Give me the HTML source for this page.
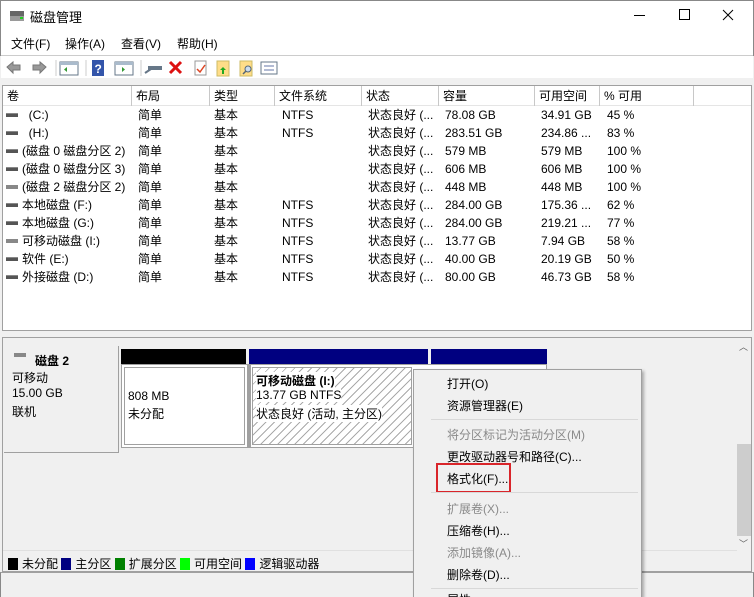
<!DOCTYPE html>
<html style="overflow:hidden"><head><meta charset="utf-8"><style>
*{margin:0;padding:0;box-sizing:border-box}
html,body{width:754px;height:597px;overflow:hidden}
body{background:#f0f0f0;font-family:"Liberation Sans","Noto Sans CJK SC",sans-serif;font-size:12px;color:#000;position:relative}
.a{position:absolute;white-space:nowrap}
.row{position:absolute;left:0;height:18px;line-height:18px;width:740px}
.row span{position:absolute}
.hd span{position:absolute;top:0;height:20px;line-height:20px;border-right:1px solid #c8c8c8;padding-left:4px}
.dk{display:inline-block;width:12px;height:4px;background:#555;border-top:1px solid #888;vertical-align:middle;margin-right:4px;position:relative;top:-1px}
.mi{position:absolute;left:447px;font-size:12px}
.dis{color:#8a8a8a}
.sep{position:absolute;left:431px;width:207px;height:1px;background:#d8d8d8}
.lg{display:inline-block;width:10px;height:12px;vertical-align:middle;margin:0 4px 0 0;position:relative;top:-1px}
</style></head><body>
<div class="a" style="left:0;top:0;width:754px;height:56px;background:#fff;border-left:1px solid #888;border-right:1px solid #888;border-top:1px solid #888"></div>
<svg class="a" style="left:9px;top:10px" width="16" height="12"><rect x="1" y="1" width="14" height="5" fill="#666"/><rect x="1" y="6" width="14" height="5" fill="#9a9a9a"/><rect x="11" y="7" width="3" height="2" fill="#2c2"/></svg>
<div class="a" style="left:30px;top:7px;font-size:13px">磁盘管理</div>
<div class="a" style="left:634px;top:15px;width:11px;height:1px;background:#000"></div>
<div class="a" style="left:679px;top:9px;width:11px;height:11px;border:1px solid #000"></div>
<svg class="a" style="left:722px;top:9px" width="12" height="12"><path d="M1 1L11 11M11 1L1 11" stroke="#000" stroke-width="1"/></svg>
<div class="a" style="left:11px;top:35px">文件(F)</div>
<div class="a" style="left:65px;top:35px">操作(A)</div>
<div class="a" style="left:121px;top:35px">查看(V)</div>
<div class="a" style="left:177px;top:35px">帮助(H)</div>
<div class="a" style="left:1px;top:55px;width:752px;height:1px;background:#ccc"></div>
<div class="a" style="left:1px;top:56px;width:752px;height:22px;background:#fff"></div>
<svg class="a" style="left:5px;top:59px" width="280" height="18">
<path d="M2 8L8 3V6H15V11H8V14Z" fill="#999" stroke="#777"/>
<path d="M41 8L35 3V6H28V11H35V14Z" fill="#999" stroke="#777"/>
<line x1="51" y1="1" x2="51" y2="17" stroke="#ccc"/>
<rect x="55" y="3" width="18" height="13" fill="#fff" stroke="#678"/><rect x="55" y="3" width="18" height="3" fill="#abc"/><path d="M62 8L59 10.5L62 13Z" fill="#393"/>
<line x1="81" y1="1" x2="81" y2="17" stroke="#ccc"/>
<rect x="87" y="1" width="12" height="16" fill="#35a"/><text x="89.5" y="14" fill="#fff" font-size="12" font-weight="bold" font-family="Liberation Sans">?</text>
<rect x="110" y="3" width="18" height="13" fill="#fff" stroke="#678"/><rect x="110" y="3" width="18" height="3" fill="#abc"/><path d="M117 8L120 10.5L117 13Z" fill="#393"/>
<line x1="136" y1="1" x2="136" y2="17" stroke="#ccc"/>
<rect x="143" y="7" width="14" height="4" fill="#678"/><line x1="140" y1="14" x2="146" y2="10" stroke="#678" stroke-width="2"/>
<path d="M165 3L176 14M176 3L165 14" stroke="#d11" stroke-width="3"/>
<rect x="190" y="2" width="11" height="14" fill="#fff" stroke="#999"/><path d="M192 10L195 13L200 6" stroke="#d42" fill="none" stroke-width="1.5"/>
<rect x="212" y="2" width="12" height="15" fill="#fd8" stroke="#cb6"/><path d="M218 8L221 11H219V15H217V11H215Z" fill="#2a2"/>
<rect x="235" y="2" width="12" height="15" fill="#fd8" stroke="#cb6"/><circle cx="243" cy="10" r="3" fill="#cde" stroke="#567"/><line x1="241" y1="12" x2="238" y2="15" stroke="#567" stroke-width="1.5"/>
<rect x="256" y="3" width="16" height="12" fill="#fff" stroke="#678"/><line x1="259" y1="7" x2="269" y2="7" stroke="#67a"/><line x1="259" y1="11" x2="269" y2="11" stroke="#67a"/>
</svg>
<div class="a" style="left:0;top:78px;width:754px;height:8px;background:#f0f0f0"></div>
<div class="a" style="left:2px;top:85px;width:750px;height:246px;background:#fff;border:1px solid #a0a0a0"></div>
<div class="a hd" style="left:3px;top:86px;width:748px;height:20px;background:#fff;border-bottom:1px solid #e5e5e5">
<span style="left:0;width:129px">卷</span><span style="left:129px;width:78px">布局</span><span style="left:207px;width:65px">类型</span><span style="left:272px;width:87px">文件系统</span><span style="left:359px;width:77px">状态</span><span style="left:436px;width:96px">容量</span><span style="left:532px;width:65px">可用空间</span><span style="left:597px;width:94px">% 可用</span>
</div>
<div class="a" style="left:3px;top:106px;font-size:12px">
<div class="row" style="top:0"><span style="left:3px"><i class="dk"></i>&nbsp; (C:)</span><span style="left:135px">简单</span><span style="left:211px">基本</span><span style="left:279px">NTFS</span><span style="left:365px">状态良好 (...</span><span style="left:442px">78.08 GB</span><span style="left:538px">34.91 GB</span><span style="left:604px">45 %</span></div>
<div class="row" style="top:18px"><span style="left:3px"><i class="dk"></i>&nbsp; (H:)</span><span style="left:135px">简单</span><span style="left:211px">基本</span><span style="left:279px">NTFS</span><span style="left:365px">状态良好 (...</span><span style="left:442px">283.51 GB</span><span style="left:538px">234.86 ...</span><span style="left:604px">83 %</span></div>
<div class="row" style="top:36px"><span style="left:3px"><i class="dk"></i>(磁盘 0 磁盘分区 2)</span><span style="left:135px">简单</span><span style="left:211px">基本</span><span style="left:365px">状态良好 (...</span><span style="left:442px">579 MB</span><span style="left:538px">579 MB</span><span style="left:604px">100 %</span></div>
<div class="row" style="top:54px"><span style="left:3px"><i class="dk"></i>(磁盘 0 磁盘分区 3)</span><span style="left:135px">简单</span><span style="left:211px">基本</span><span style="left:365px">状态良好 (...</span><span style="left:442px">606 MB</span><span style="left:538px">606 MB</span><span style="left:604px">100 %</span></div>
<div class="row" style="top:72px"><span style="left:3px"><i class="dk" style="background:#888"></i>(磁盘 2 磁盘分区 2)</span><span style="left:135px">简单</span><span style="left:211px">基本</span><span style="left:365px">状态良好 (...</span><span style="left:442px">448 MB</span><span style="left:538px">448 MB</span><span style="left:604px">100 %</span></div>
<div class="row" style="top:90px"><span style="left:3px"><i class="dk"></i>本地磁盘 (F:)</span><span style="left:135px">简单</span><span style="left:211px">基本</span><span style="left:279px">NTFS</span><span style="left:365px">状态良好 (...</span><span style="left:442px">284.00 GB</span><span style="left:538px">175.36 ...</span><span style="left:604px">62 %</span></div>
<div class="row" style="top:108px"><span style="left:3px"><i class="dk"></i>本地磁盘 (G:)</span><span style="left:135px">简单</span><span style="left:211px">基本</span><span style="left:279px">NTFS</span><span style="left:365px">状态良好 (...</span><span style="left:442px">284.00 GB</span><span style="left:538px">219.21 ...</span><span style="left:604px">77 %</span></div>
<div class="row" style="top:126px"><span style="left:3px"><i class="dk" style="background:#888"></i>可移动磁盘 (I:)</span><span style="left:135px">简单</span><span style="left:211px">基本</span><span style="left:279px">NTFS</span><span style="left:365px">状态良好 (...</span><span style="left:442px">13.77 GB</span><span style="left:538px">7.94 GB</span><span style="left:604px">58 %</span></div>
<div class="row" style="top:144px"><span style="left:3px"><i class="dk"></i>软件 (E:)</span><span style="left:135px">简单</span><span style="left:211px">基本</span><span style="left:279px">NTFS</span><span style="left:365px">状态良好 (...</span><span style="left:442px">40.00 GB</span><span style="left:538px">20.19 GB</span><span style="left:604px">50 %</span></div>
<div class="row" style="top:162px"><span style="left:3px"><i class="dk"></i>外接磁盘 (D:)</span><span style="left:135px">简单</span><span style="left:211px">基本</span><span style="left:279px">NTFS</span><span style="left:365px">状态良好 (...</span><span style="left:442px">80.00 GB</span><span style="left:538px">46.73 GB</span><span style="left:604px">58 %</span></div>
</div>
<div class="a" style="left:2px;top:337px;width:750px;height:235px;background:#f0f0f0;border:1px solid #a0a0a0"></div>
<div class="a" style="left:737px;top:338px;width:14px;height:212px;background:#f0f0f0"></div>
<div class="a" style="left:737px;top:444px;width:14px;height:92px;background:#cdcdcd"></div>
<div class="a" style="left:739px;top:340px;font-size:9px;color:#606060">︿</div>
<div class="a" style="left:739px;top:537px;font-size:9px;color:#606060">﹀</div>
<div class="a" style="left:4px;top:346px;width:115px;height:107px;background:#f0f0f0;border-right:1px solid #a0a0a0;border-bottom:1px solid #a0a0a0"></div>
<div class="a" style="left:14px;top:353px;width:12px;height:4px;background:#888"></div>
<div class="a" style="left:35px;top:352px;font-weight:bold">磁盘 2</div>
<div class="a" style="left:12px;top:369px">可移动</div>
<div class="a" style="left:12px;top:386px">15.00 GB</div>
<div class="a" style="left:12px;top:403px">联机</div>
<div class="a" style="left:121px;top:349px;width:125px;height:15px;background:#000"></div>
<div class="a" style="left:249px;top:349px;width:179px;height:15px;background:#000080"></div>
<div class="a" style="left:431px;top:349px;width:116px;height:15px;background:#000080"></div>
<div class="a" style="left:121px;top:364px;width:426px;height:84px;background:#fff;border:1px solid #a0a0a0"></div>
<div class="a" style="left:124px;top:367px;width:121px;height:78px;background:#fff;border:1px solid #a0a0a0"></div>
<div class="a" style="left:128px;top:389px">808 MB</div>
<div class="a" style="left:128px;top:405px">未分配</div>
<div class="a" style="left:247px;top:365px;width:4px;height:82px;background:#a0a0a0"></div>
<div class="a" style="left:252px;top:367px;width:160px;height:78px;border:1px solid #a0a0a0;background:repeating-linear-gradient(135deg,#fff 0,#fff 5px,#aaa 5px,#aaa 6px)"></div>
<div class="a" style="left:256px;top:372px;font-weight:bold;background:#fff">可移动磁盘 (I:)</div>
<div class="a" style="left:256px;top:388px;background:#fff">13.77 GB NTFS</div>
<div class="a" style="left:256px;top:405px;background:#fff">状态良好 (活动, 主分区)</div>
<div class="a" style="left:3px;top:550px;width:734px;height:21px;background:#f0f0f0;border-top:1px solid #e0e0e0"></div>
<div class="a" style="left:8px;top:555px;font-size:12px"><i class="lg" style="background:#000"></i>未分配 <i class="lg" style="background:#000080"></i>主分区 <i class="lg" style="background:#008000"></i>扩展分区 <i class="lg" style="background:#00ff00"></i>可用空间 <i class="lg" style="background:#0000ff"></i>逻辑驱动器</div>
<div class="a" style="left:0;top:572px;width:754px;height:25px;background:#f0f0f0;border-top:1px solid #a0a0a0;border-left:1px solid #888;border-right:1px solid #888"></div>
<div class="a" style="left:413px;top:369px;width:229px;height:228px;background:#f0f0f0;border:1px solid #a0a0a0;border-bottom:none;box-shadow:2px 2px 3px rgba(0,0,0,.3)"></div>
<div class="mi" style="top:375px">打开(O)</div>
<div class="mi" style="top:397px">资源管理器(E)</div>
<div class="sep" style="top:419px"></div>
<div class="mi dis" style="top:426px">将分区标记为活动分区(M)</div>
<div class="mi" style="top:448px">更改驱动器号和路径(C)...</div>
<div class="mi" style="top:470px">格式化(F)...</div>
<div class="a" style="left:436px;top:463px;width:75px;height:30px;border:2px solid #d9252a"></div>
<div class="sep" style="top:492px"></div>
<div class="mi dis" style="top:500px">扩展卷(X)...</div>
<div class="mi" style="top:522px">压缩卷(H)...</div>
<div class="mi dis" style="top:544px">添加镜像(A)...</div>
<div class="mi" style="top:566px">删除卷(D)...</div>
<div class="sep" style="top:588px"></div>
<div class="mi" style="top:591px">属性</div>
</body></html>
